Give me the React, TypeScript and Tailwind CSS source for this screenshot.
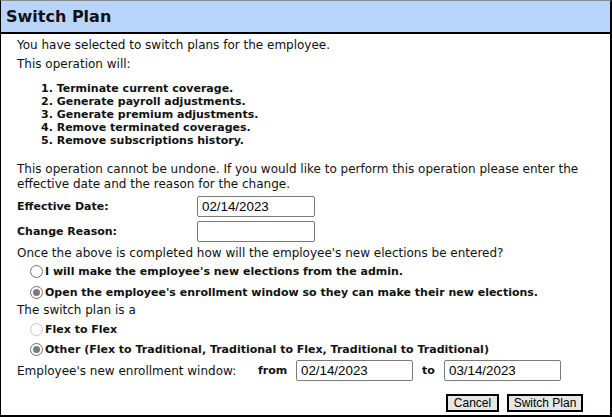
import React from 'react';

const Radio: React.FC<{ checked?: boolean; disabled?: boolean }> = ({ checked, disabled }) => (
  <span
    className={`inline-flex w-[13px] h-[13px] shrink-0 items-center justify-center rounded-full border bg-white ${
      disabled ? 'border-[#c9c9c9]' : 'border-[#6f6f6f]'
    }`}
  >
    {checked && <span className="block w-[7px] h-[7px] rounded-full bg-[#7b7b7b]" />}
  </span>
);

const TextBox: React.FC<{ value?: string; width: string }> = ({ value, width }) => (
  <div
    className={`${width} h-[21px] border border-[#7a7a7a] rounded-[2px] bg-white pl-[4px] flex items-center text-[13.33px] text-black`}
    style={{ fontFamily: '"Liberation Sans", Arial, sans-serif' }}
  >
    {value}
  </div>
);

const Btn: React.FC<{ label: string; width: string }> = ({ label, width }) => (
  <button
    className={`${width} h-[18px] border-2 border-black bg-[#e6e6e6] flex items-center justify-center text-[12px] text-black leading-none`}
    style={{ fontFamily: '"Liberation Sans", Arial, sans-serif' }}
  >
    {label}
  </button>
);

export default function App() {
  return (
    <div
      className="w-[612px] h-[417px] bg-white border-t border-t-[#8a8a8a] border-l border-l-black border-r-2 border-r-black border-b-2 border-b-black text-[#111] overflow-hidden flex flex-col"
      style={{ fontFamily: '"DejaVu Sans", Verdana, sans-serif' }}
    >
      <div className="h-[33px] shrink-0 bg-[#b9d5fb] border-b-2 border-b-black flex items-center pl-[5px]">
        <h1 className="text-[16px] font-bold leading-none">Switch Plan</h1>
      </div>

      <div className="pl-[16px] text-[12px] leading-none flex flex-col">
        <div className="h-[22px] flex items-center">You have selected to switch plans for the employee.</div>
        <div className="h-[16px] flex items-center">This operation will:</div>

        <ol className="mt-[10px] pl-[24px] text-[11px] font-bold">
          <li className="h-[13px] flex items-center">1. Terminate current coverage.</li>
          <li className="h-[13px] flex items-center">2. Generate payroll adjustments.</li>
          <li className="h-[13px] flex items-center">3. Generate premium adjustments.</li>
          <li className="h-[13px] flex items-center">4. Remove terminated coverages.</li>
          <li className="h-[13px] flex items-center">5. Remove subscriptions history.</li>
        </ol>

        <p className="mt-[15px] leading-[15px] pr-[10px]">
          This operation cannot be undone. If you would like to perform this operation please enter the effective date
          and the reason for the change.
        </p>

        <div className="mt-[4px] flex items-center text-[11px]">
          <span className="w-[180px] font-bold">Effective Date:</span>
          <TextBox value="02/14/2023" width="w-[118px]" />
        </div>
        <div className="mt-[4px] flex items-center text-[11px]">
          <span className="w-[180px] font-bold">Change Reason:</span>
          <TextBox width="w-[118px]" />
        </div>

        <div className="mt-[2px] h-[18px] flex items-center">
          Once the above is completed how will the employee's new elections be entered?
        </div>
        <div className="h-[19px] flex items-center gap-[2px] pl-[13px] font-bold text-[11px]">
          <Radio />
          <span>I will make the employee's new elections from the admin.</span>
        </div>
        <div className="mt-[1px] h-[20px] flex items-center gap-[2px] pl-[13px] font-bold text-[11px]">
          <Radio checked />
          <span>Open the employee's enrollment window so they can make their new elections.</span>
        </div>
        <div className="h-[16px] flex items-center">The switch plan is a</div>
        <div className="mt-[1px] h-[20px] flex items-center gap-[2px] pl-[13px] font-bold text-[11px]">
          <Radio disabled />
          <span>Flex to Flex</span>
        </div>
        <div className="h-[20px] flex items-center gap-[2px] pl-[13px] font-bold text-[11px]">
          <Radio checked />
          <span>Other (Flex to Traditional, Traditional to Flex, Traditional to Traditional)</span>
        </div>

        <div className="mt-[1px] flex items-center">
          <span className="w-[241px]">Employee's new enrollment window:</span>
          <span className="w-[38px] font-bold text-[11px]">from</span>
          <TextBox value="02/14/2023" width="w-[117px]" />
          <span className="ml-[9px] w-[22px] font-bold text-[11px]">to</span>
          <TextBox value="03/14/2023" width="w-[117px]" />
        </div>

        <div className="mt-[13px] flex justify-end gap-[8px] pr-[27px]">
          <Btn label="Cancel" width="w-[53px]" />
          <Btn label="Switch Plan" width="w-[76px]" />
        </div>
      </div>
    </div>
  );
}
